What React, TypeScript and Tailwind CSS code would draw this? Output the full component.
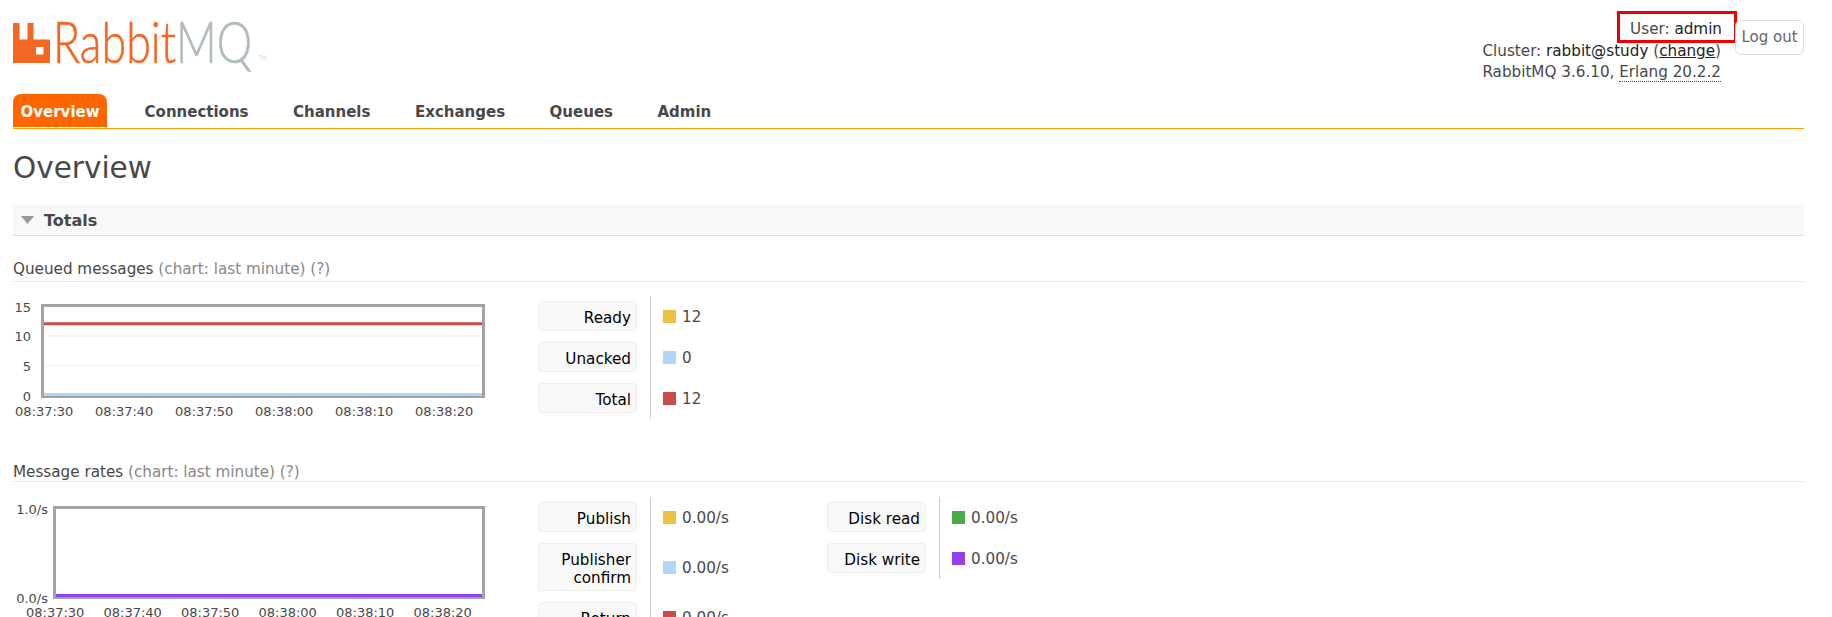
import React from 'react'

const tabs = ['Connections', 'Channels', 'Exchanges', 'Queues', 'Admin']
const times1 = ['08:37:30', '08:37:40', '08:37:50', '08:38:00', '08:38:10', '08:38:20']

type Row = { label: React.ReactNode; value: string; swatch: string }

const queued: Row[] = [
  { label: 'Ready', value: '12', swatch: 'bg-[#edc240]' },
  { label: 'Unacked', value: '0', swatch: 'bg-[#afd8f8]' },
  { label: 'Total', value: '12', swatch: 'bg-[#cb4b4b]' },
]

const rates: Row[] = [
  { label: 'Publish', value: '0.00/s', swatch: 'bg-[#edc240]' },
  { label: <>Publisher<br />confirm</>, value: '0.00/s', swatch: 'bg-[#afd8f8]' },
  { label: 'Return', value: '0.00/s', swatch: 'bg-[#cb4b4b]' },
]

const disk: Row[] = [
  { label: 'Disk read', value: '0.00/s', swatch: 'bg-[#4da74d]' },
  { label: 'Disk write', value: '0.00/s', swatch: 'bg-[#9440ed]' },
]

const StatTable: React.FC<{ rows: Row[] }> = ({ rows }) => (
  <div>
    {rows.map((row, i) => (
      <div key={i} className="flex">
        <div className="w-[113px] pt-[5px] pb-[6px] pr-[13px] border-r border-[#ccc]">
          <div className="pl-[5px] pr-[5px] pt-[6.5px] pb-[3.5px] min-h-[30px] bg-[#f9f9f9] border border-[#eee] rounded-[4px] text-right text-black leading-[18px]">
            {row.label}
          </div>
        </div>
        <div className="w-[176px] pl-3 flex items-center gap-[6px]">
          <span className={`w-[13px] h-[13px] ${row.swatch}`} />
          <span className="pt-[1px]">{row.value}</span>
        </div>
      </div>
    ))}
  </div>
)

const SectionTitle: React.FC<{ title: string; className: string }> = ({ title, className }) => (
  <div className={`border-b border-[#e4e4e4] leading-[26px] ${className}`}>
    {title} <span className="text-[#888]">(chart: last minute) (?)</span>
  </div>
)

const ChartText: React.FC<{ x: number; y: number; end?: boolean; children: React.ReactNode }> = ({ x, y, end, children }) => (
  <text x={x} y={y} textAnchor={end ? 'end' : 'start'} dominantBaseline="central" fontSize="13" fill="#484848">
    {children}
  </text>
)

const QueuedChart = () => (
  <svg width="480" height="123" className="shrink-0 block">
    <rect x="29.5" y="9.5" width="441" height="91" fill="none" stroke="#a3a3a3" strokeWidth="3" />
    <line x1="31" x2="469" y1="40" y2="40" stroke="#eee" />
    <line x1="31" x2="469" y1="70" y2="70" stroke="#eee" />
    <line x1="31" x2="469" y1="27.7" y2="27.7" stroke="#cb4b4b" strokeWidth="3" />
    <line x1="31" x2="469" y1="98.5" y2="98.5" stroke="#afd8f8" strokeWidth="3" />
    <ChartText x={18} y={11} end>15</ChartText>
    <ChartText x={18} y={40} end>10</ChartText>
    <ChartText x={18} y={70} end>5</ChartText>
    <ChartText x={18} y={100} end>0</ChartText>
    {times1.map((t, i) => (
      <ChartText key={t} x={2 + i * 80} y={115}>{t}</ChartText>
    ))}
  </svg>
)

const RatesChart = () => (
  <svg width="480" height="123" className="shrink-0 block">
    <rect x="41.5" y="10.5" width="429" height="90" fill="none" stroke="#a3a3a3" strokeWidth="3" />
    <line x1="43" x2="469" y1="98.5" y2="98.5" stroke="#9440ed" strokeWidth="3" />
    <ChartText x={35} y={12} end>1.0/s</ChartText>
    <ChartText x={35} y={101} end>0.0/s</ChartText>
    {times1.map((t, i) => (
      <ChartText key={t} x={13 + i * 77.5} y={115}>{t}</ChartText>
    ))}
  </svg>
)

const Logo = () => (
  <div className="flex items-start pt-[23px]">
    <svg width="37" height="40" viewBox="0 0 37 40" className="block shrink-0">
      <path
        fillRule="evenodd"
        fill="#f26722"
        d="M0 0H6.5V16.5H14.5V0H20.5V16.5H37V40H0ZM23 24V31.5H30.5V24Z"
      />
    </svg>
    <div className="relative ml-[3px] -mt-[14px] origin-left scale-x-[0.785] whitespace-nowrap font-['Lato'] font-light text-[57px] leading-[64px] [-webkit-text-stroke:0.6px_currentColor]">
      <span className="text-[#f26722]">Rabbit</span>
      <span className="text-[#b0bdb7]">MQ</span>
      <span className="absolute left-[100%] bottom-[11px] ml-[8px] text-[7px] leading-[8px] text-[#b0bdb7] [-webkit-text-stroke:0]">TM</span>
    </div>
  </div>
)

export default function App() {
  return (
    <div className="h-[617px] w-[1832px] overflow-hidden bg-white pl-[13px] pr-[28px] font-['DejaVu_Sans',sans-serif] text-[15.2px] text-[#484848]">
      <div className="flex justify-between h-[94px]">
        <Logo />
        <div className="pt-[11px] flex flex-col items-end">
          <div className="flex h-[32px]">
            <div className="h-[32px] w-[120px] border-[3px] border-[#f00000] pr-3 text-right leading-[30px] whitespace-nowrap">
              User: <span className="text-[#222]">admin</span>
            </div>
            <button className="mt-[9px] -ml-[2px] h-[35px] w-[69px] border border-[#ddd] rounded-[6px] bg-white text-[15px] text-[#666] whitespace-nowrap">
              Log out
            </button>
          </div>
          <div className="mr-[83px] -mt-[2px] text-right leading-[21px] whitespace-nowrap">
            <div>
              Cluster: <span className="text-[#222]">rabbit@study</span> (<span className="text-[#222] underline">change</span>)
            </div>
            <div>
              RabbitMQ 3.6.10, <span className="border-b border-dotted border-[#484848]">Erlang 20.2.2</span>
            </div>
          </div>
        </div>
      </div>

      <div className="flex gap-[30.5px] h-[35px] border-b border-[#ff9900] font-bold text-[15px]">
        <div className="h-[33px] px-[7.5px] leading-[37px] bg-[#ff6600] text-white rounded-t-[8px]">Overview</div>
        {tabs.map((t) => (
          <div key={t} className="px-[7px] leading-[37px]">{t}</div>
        ))}
      </div>

      <h1 className="mt-[19px] h-[40px] leading-[41px] text-[29.5px] font-normal">Overview</h1>

      <div className="mt-[17px] h-[31px] flex items-center bg-[#f8f8f8] border-b border-[#ddd] font-bold text-[16px] pl-2 gap-[10px]">
        <svg width="13" height="8" viewBox="0 0 13 8" className="block">
          <path d="M0 0H13L6.5 8Z" fill="#999" />
        </svg>
        <span className="pt-[1px]">Totals</span>
      </div>

      <SectionTitle title="Queued messages" className="mt-[20px] h-[26px]" />
      <div className="flex pt-[14px]">
        <QueuedChart />
        <div className="ml-[45px]">
          <StatTable rows={queued} />
        </div>
      </div>

      <SectionTitle title="Message rates" className="mt-[40px] h-[23px]" />
      <div className="flex pt-[15px]">
        <RatesChart />
        <div className="ml-[45px]">
          <StatTable rows={rates} />
        </div>
        <div>
          <StatTable rows={disk} />
        </div>
      </div>
    </div>
  )
}
